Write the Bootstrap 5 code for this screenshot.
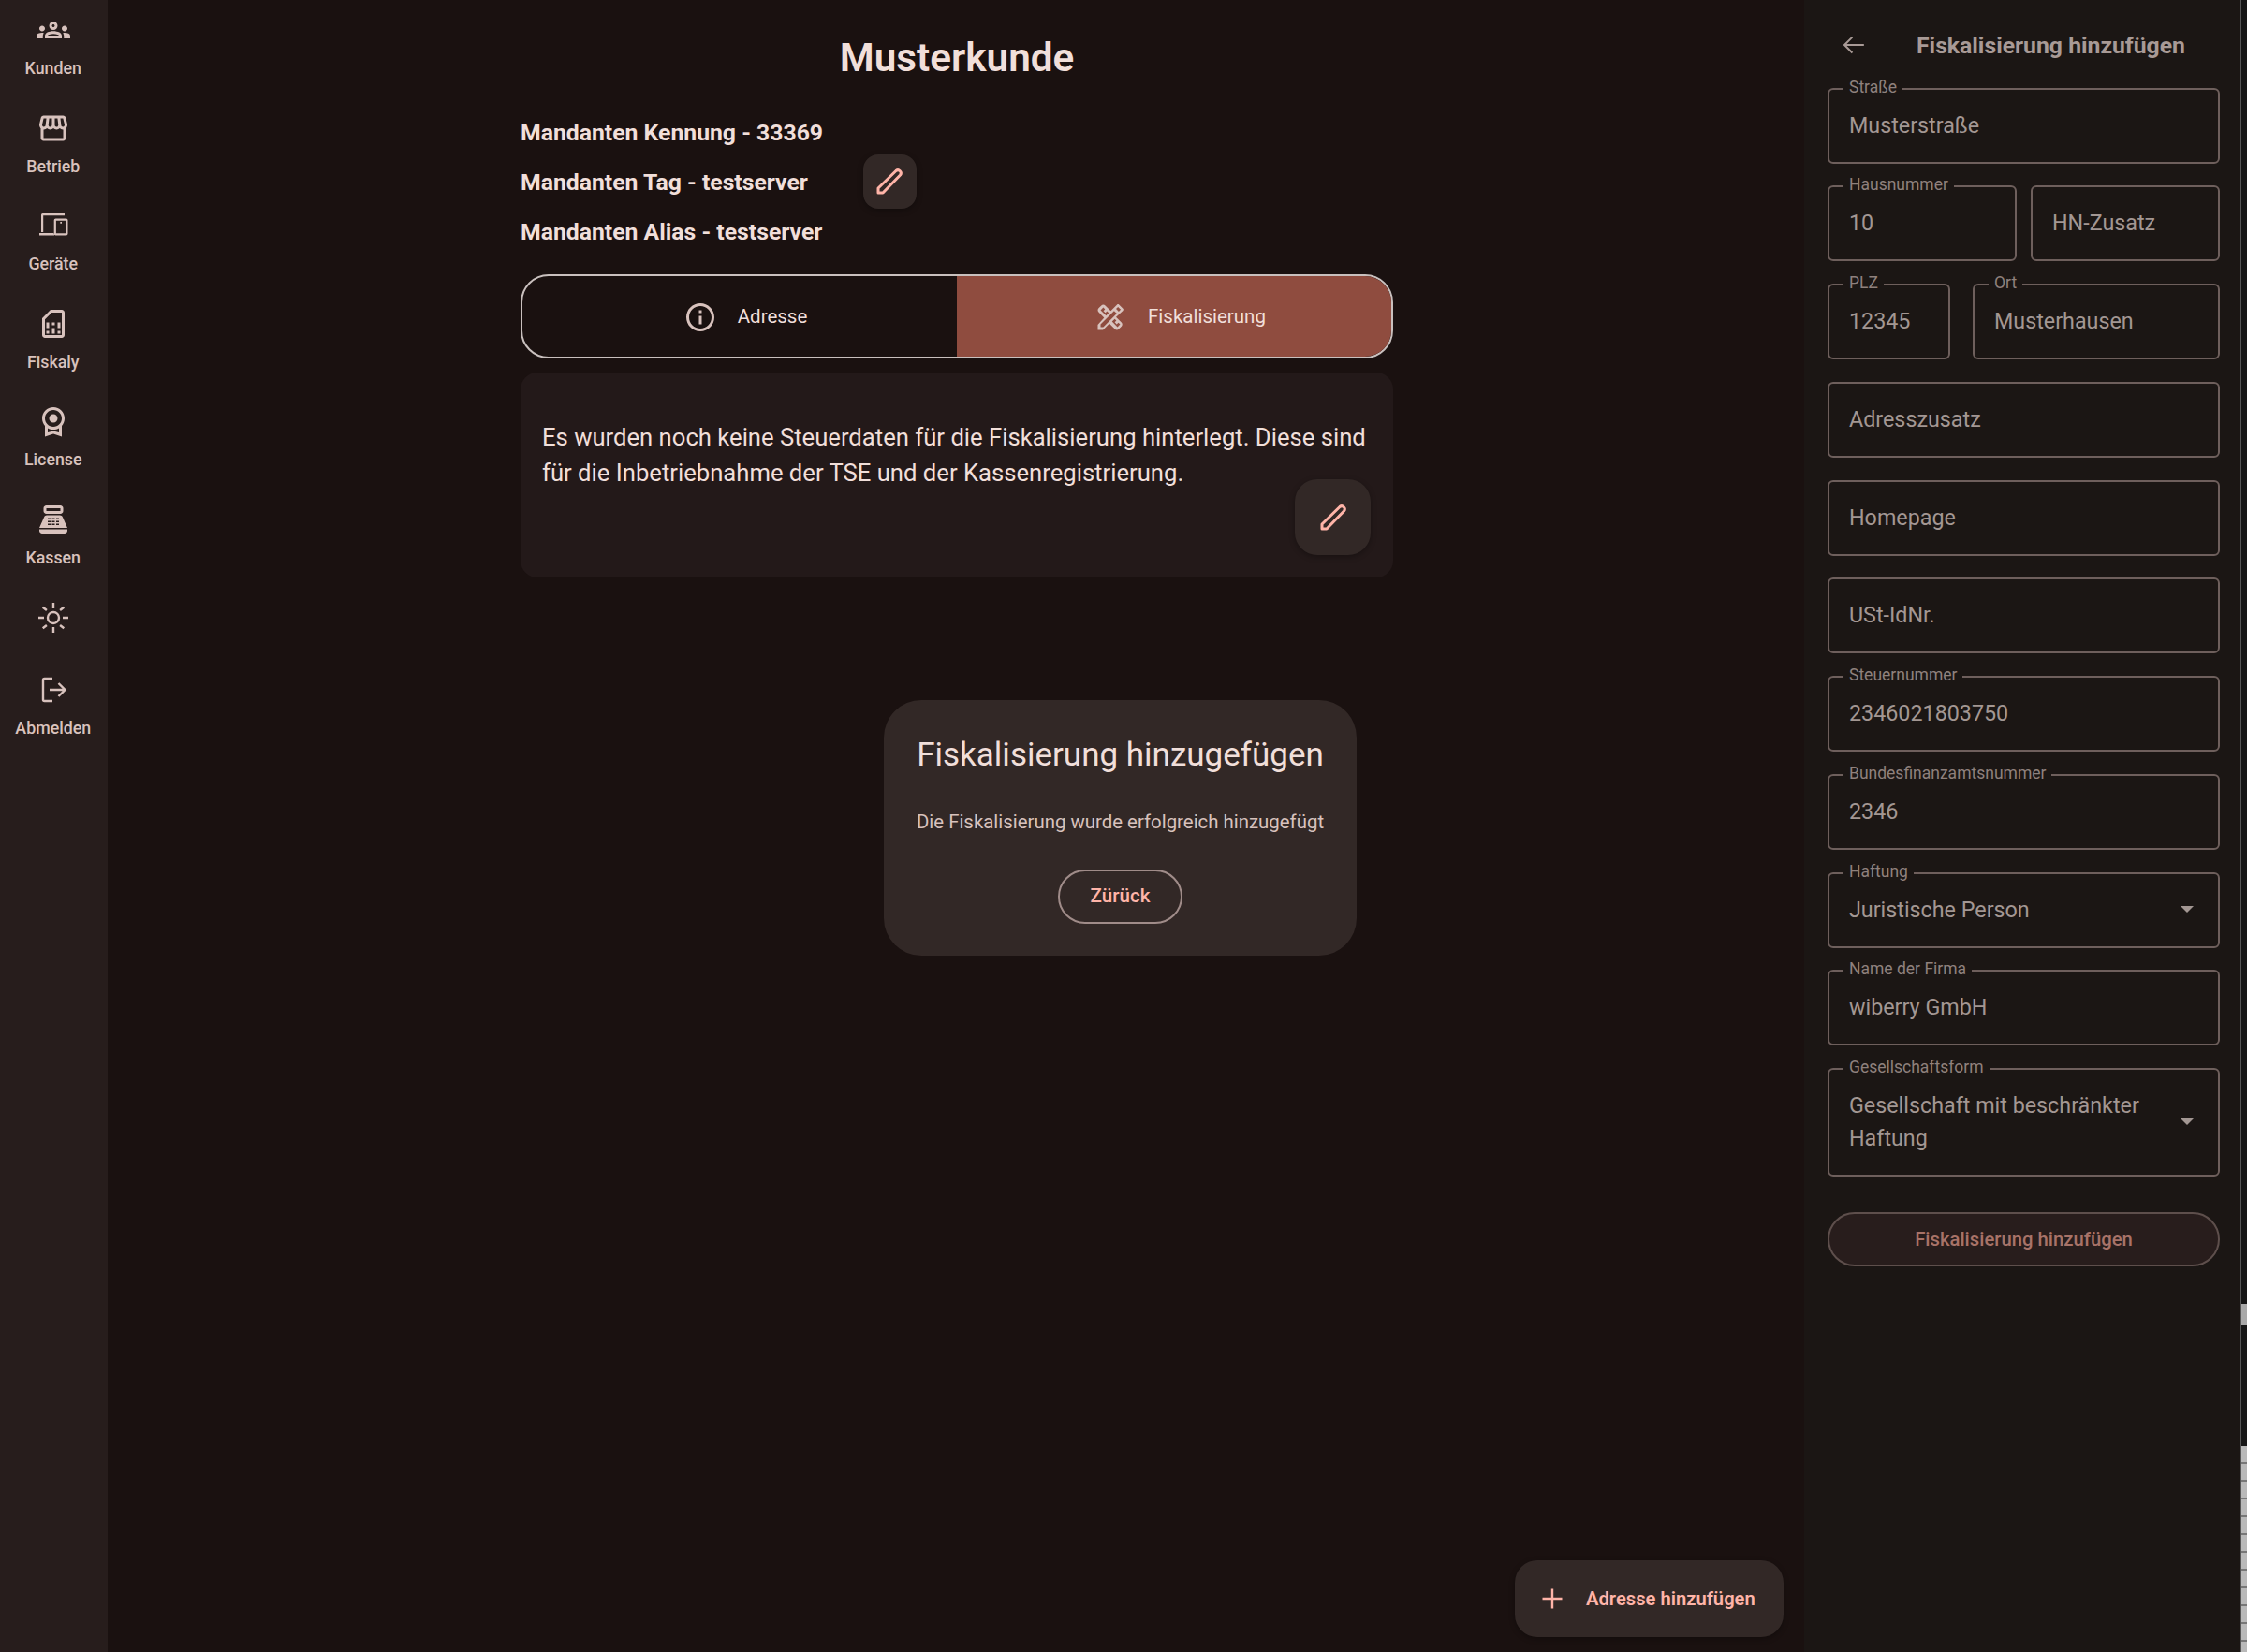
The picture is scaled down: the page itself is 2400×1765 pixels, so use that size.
<!DOCTYPE html>
<html lang="de">
<head>
<meta charset="utf-8">
<title>Musterkunde</title>
<link href="https://cdn.jsdelivr.net/npm/bootstrap@5.3.0/dist/css/bootstrap.min.css" rel="stylesheet">
<style>
html,body{height:100%;margin:0;background:#1a1110;overflow:hidden}
body{font-family:Roboto,"Liberation Sans",sans-serif}
.app-shell{width:2400px;height:1765px}
.side-rail{width:115px;background:#271d1c;padding:14px 1.5px 0 0;flex:none}
.rail-item{height:104.6px;color:#d8c2bd;font-size:17.8px;font-weight:500;line-height:21px}
.rail-item svg{width:36px;height:36px;fill:currentColor;margin-bottom:12px}
.rail-sun{height:77px}
.rail-sun svg{margin-bottom:0}
.main-pane{width:1812px;flex:none;position:relative;background:#1a1110}
.content-col{width:932px;margin-left:441px}
.page-title{font-size:42.3px;font-weight:600;color:#f1dfda;line-height:47px;text-align:center;margin:37.5px 0 30px}
.meta-line{font-size:24.75px;font-weight:700;color:#f1dfda;height:53px;line-height:53px;display:flex;align-items:center}
.tonal-btn{background:#322826;border:0;color:#ffb4a8;box-shadow:0 2px 6px rgba(0,0,0,.3)}
.pen-small{width:57px;height:58px;border-radius:16px;margin-left:59px;flex:none}
.pen-small svg,.pen-big svg{width:36px;height:36px}
.tab-bar{height:90px;border:2px solid #c9c0be;border-radius:30px;overflow:hidden;margin-top:19.5px}
.tab-part{width:50%;font-size:20.5px;color:#f1dfda;gap:22px;padding-left:12px;padding-top:1px}
.tab-part svg{width:36px;height:36px;fill:#d8c2bd}
.tab-on{background:#8f4c3f}
.info-box{background:#231919;border-radius:18px;margin-top:15px;height:219px;padding:50px 23px 0;color:#f1dfda;font-size:25.65px;line-height:38px;position:relative}
.pen-big{position:absolute;right:24px;bottom:24px;width:81px;height:81px;border-radius:24px}
.dlg{position:absolute;left:829px;top:748px;width:505px;height:273px;background:#322826;border-radius:40px;text-align:center;color:#f1dfda}
.dlg-title{font-size:35px;line-height:40px;margin-top:38.5px}
.dlg-text{font-size:20.4px;line-height:28px;color:#d8c2bd;margin-top:37.5px}
.dlg-btn{width:133px;height:58px;margin-top:36.5px;border:2px solid #a08c89;border-radius:29px;color:#ffb4a8;font-size:20.6px;font-weight:500;background:transparent}
.fab-add{position:absolute;right:22px;bottom:16px;width:287px;height:82px;border-radius:24px;font-size:20.2px;font-weight:600;gap:18px;padding-left:22px}
.fab-add svg{width:36px;height:36px;fill:currentColor}
.form-pane{width:466px;flex:none;background:#1b1614;padding:0 22px 0 25px;color:#a39793}
.form-head{height:93.5px;font-size:24.75px;font-weight:700;color:#a89a96;position:relative}
.form-head svg{position:absolute;left:13px;top:33px;width:30px;height:30px;fill:#a89a96}
.form-head span{position:absolute;left:95px;top:34px;line-height:30px;white-space:nowrap}
.field-stack{display:flex;flex-direction:column;gap:23.75px}
.field-duo{display:flex;gap:15px}
.field-duo .out-field{flex:1 1 0}
.plz-row{gap:24px}
.plz-row .plz-field{flex:0 0 131px}
.out-field{position:relative;height:81px;flex:none;border:2px solid #6e5f5c;border-radius:6px;font-size:23.3px;padding:0 21px;display:flex;align-items:center;min-width:0;color:#a39793}
.out-tall{height:116px;line-height:35px}
.out-label{position:absolute;left:15px;top:-13px;font-size:17.5px;line-height:21px;padding:0 6px;background:#1b1614;color:#8f817d;white-space:nowrap}
.sel-caret{position:absolute;right:26px;top:50%;margin-top:-4px;width:0;height:0;border-left:7px solid transparent;border-right:7px solid transparent;border-top:7px solid #a39793}
.submit-pill{height:58px;margin-top:38px;width:100%;border:2px solid #5e4f4c;border-radius:29px;background:#281d1c;color:#a87368;font-size:20.3px;font-weight:500}
.edge-strip{width:7px;flex:none;display:flex;flex-direction:column;border-left:1px solid #555}
.edge-dark{height:1393px;background:#151515}
.edge-thumb{height:23px;background:#a9a9a9}
.edge-gap{height:129px;background:#161616}
.edge-light{flex:1;background:repeating-linear-gradient(#b9b9b9 0 17px,#777 17px 19px)}
</style>
</head>
<body>
<div class="app-shell d-flex">
  <nav class="side-rail d-flex flex-column">
    <div class="rail-item d-flex flex-column align-items-center">
      <svg viewBox="0 0 24 24"><path d="M4,13c1.1,0,2-0.9,2-2c0-1.1-0.9-2-2-2s-2,0.9-2,2C2,12.1,2.9,13,4,13z M5.13,14.1C4.76,14.04,4.39,14,4,14 c-0.99,0-1.93,0.21-2.78,0.58C0.48,14.9,0,15.62,0,16.43V18l4.5,0v-1.61C4.5,15.56,4.73,14.78,5.13,14.1z M20,13c1.1,0,2-0.9,2-2 c0-1.1-0.9-2-2-2s-2,0.9-2,2C18,12.1,18.9,13,20,13z M24,16.43c0-0.81-0.48-1.53-1.22-1.85C21.93,14.21,20.99,14,20,14 c-0.39,0-0.76,0.04-1.13,0.1c0.4,0.68,0.63,1.46,0.63,2.29V18l4.5,0V16.43z M16.24,13.65c-1.17-0.52-2.61-0.9-4.24-0.9 c-1.63,0-3.07,0.39-4.24,0.9C6.68,14.13,6,15.21,6,16.39V18h12v-1.61C18,15.21,17.32,14.13,16.24,13.65z M8.07,16 c0.09-0.23,0.13-0.39,0.91-0.69c0.97-0.38,1.99-0.56,3.02-0.56s2.05,0.18,3.02,0.56c0.77,0.3,0.81,0.46,0.91,0.69H8.07z M12,8 c0.55,0,1,0.45,1,1s-0.45,1-1,1s-1-0.45-1-1S11.45,8,12,8 M12,6c-1.66,0-3,1.34-3,3c0,1.66,1.34,3,3,3s3-1.34,3-3 C15,7.34,13.66,6,12,6L12,6z"/></svg>
      <span>Kunden</span>
    </div>
    <div class="rail-item d-flex flex-column align-items-center">
      <svg viewBox="0 0 24 24"><path d="M21.9 8.89l-1.05-4.37c-.22-.9-1-1.52-1.91-1.52H5.05c-.9 0-1.69.63-1.9 1.52L2.1 8.89c-.24 1.02-.02 2.06.62 2.88.08.11.19.19.28.29V19c0 1.1.9 2 2 2h14c1.1 0 2-.9 2-2v-6.94c.09-.09.2-.18.28-.28.64-.82.87-1.87.62-2.89zm-2.99-3.9l1.05 4.37c.1.42.01.84-.25 1.17-.14.18-.44.47-.94.47-.61 0-1.14-.49-1.21-1.14L16.98 5l1.93-.01zM13 5h1.96l.54 4.52c.05.39-.07.78-.33 1.07-.22.26-.54.41-.95.41-.67 0-1.22-.59-1.22-1.31V5zM8.49 9.52L9.04 5H11v4.69c0 .72-.55 1.31-1.29 1.31-.34 0-.65-.15-.89-.41-.25-.29-.37-.68-.33-1.07zm-4.45-.16L5.05 5h1.97l-.58 4.86c-.08.65-.6 1.14-1.21 1.14-.49 0-.8-.29-.93-.47-.27-.32-.36-.75-.26-1.17zM5 19v-6.03c.08.01.15.03.23.03.87 0 1.66-.36 2.24-.95.6.6 1.4.95 2.31.95.87 0 1.65-.36 2.23-.93.59.57 1.39.93 2.29.93.84 0 1.64-.35 2.24-.95.58.59 1.37.95 2.24.95.08 0 .15-.02.23-.03V19H5z"/></svg>
      <span>Betrieb</span>
    </div>
    <div class="rail-item d-flex flex-column align-items-center">
      <svg viewBox="0 0 36 36"><path d="M6.500 5a1.500 1.500 0 0 0-1.500 1.500V25h2.200V7.200H30V5zM3 26h16v2.400H3zM20.500 10.500a1.800 1.800 0 0 0-1.800 1.800v14.400a1.800 1.800 0 0 0 1.800 1.800h11.200a1.800 1.800 0 0 0 1.800-1.800V12.300a1.800 1.800 0 0 0-1.800-1.800zm.400 2.200h10.400v13.600H20.900zM25.300 14h1.700v1.800h-1.700z" fill-rule="evenodd"/></svg>
      <span>Geräte</span>
    </div>
    <div class="rail-item d-flex flex-column align-items-center">
      <svg viewBox="0 0 24 24"><path d="M18 2h-8L4 8v12c0 1.100.9 2 2 2h12c1.100 0 2-.9 2-2V4c0-1.100-.9-2-2-2zm0 2v16H6V8.830L10.830 4H18zM7 17h2v2H7zm8 0h2v2h-2zM7 11h2v4H7zm4 4h2v4h-2zm0-4h2v2h-2zm4 0h2v4h-2z"/></svg>
      <span>Fiskaly</span>
    </div>
    <div class="rail-item d-flex flex-column align-items-center">
      <svg viewBox="0 0 24 24"><path d="M12 7a3 3 0 1 0 0 6 3 3 0 0 0 0-6zM20 10c0-4.420-3.580-8-8-8s-8 3.580-8 8c0 2.030.76 3.870 2 5.280V23l6-2 6 2v-7.720c1.240-1.410 2-3.250 2-5.280zM12 4c3.310 0 6 2.690 6 6s-2.690 6-6 6-6-2.690-6-6 2.690-6 6-6zm0 15l-4 1.020v-3.100c1.180.68 2.540 1.080 4 1.080s2.820-.4 4-1.080v3.100L12 19z"/></svg>
      <span>License</span>
    </div>
    <div class="rail-item d-flex flex-column align-items-center">
      <svg viewBox="0 0 24 24"><path fill-rule="evenodd" d="M17 2H7c-1.100 0-2 .9-2 2v2c0 1.100.9 2 2 2h10c1.100 0 2-.9 2-2V4c0-1.100-.9-2-2-2zm0 4H7V4h10v2zM20 22H4c-1.100 0-2-.9-2-2v-1h20v1c0 1.100-.9 2-2 2zM18.530 10.190C18.210 9.470 17.490 9 16.700 9H7.300c-.79 0-1.510.47-1.830 1.190L2 18h20zM8 11h2v1H8zm3 0h2v1h-2zm3 0h2v1h-2zM8 13h2v1H8zm3 0h2v1h-2zm3 0h2v1h-2zM8 15h2v1H8zm3 0h2v1h-2zm3 0h2v1h-2z"/></svg>
      <span>Kassen</span>
    </div>
    <div class="rail-item rail-sun d-flex flex-column align-items-center">
      <svg viewBox="0 0 36 36"><g fill="none" stroke="currentColor" stroke-width="2.400"><circle cx="18" cy="18" r="6"/><path d="M18 2v6M18 28v6M2 18h6M28 18h6M6.700 6.700l4.200 3.300M25.100 26l4.200 3.300M29.300 6.700L25.100 10M10.900 26l-4.200 3.300"/></g></svg>
    </div>
    <div class="rail-item d-flex flex-column align-items-center">
      <svg viewBox="0 0 36 36"><path fill="none" stroke="currentColor" stroke-width="2.400" d="M17 6H8.500A1.500 1.500 0 0 0 7 7.500v21A1.500 1.500 0 0 0 8.500 30H17M14 18h16M23.500 11l7 7-7 7"/></svg>
      <span>Abmelden</span>
    </div>
  </nav>

  <main class="main-pane">
    <div class="content-col">
      <h1 class="page-title">Musterkunde</h1>
      <div class="meta-line">Mandanten Kennung - 33369</div>
      <div class="meta-line">
        <span>Mandanten Tag - testserver</span>
        <button class="btn tonal-btn pen-small d-flex align-items-center justify-content-center p-0" type="button" aria-label="Bearbeiten"><svg viewBox="0 0 36 36"><path fill="none" stroke="currentColor" stroke-width="3" stroke-linejoin="round" d="M6 25L25 6.500A3.200 3.200 0 0 1 29.500 11L11 30H6z"/></svg></button>
      </div>
      <div class="meta-line">Mandanten Alias - testserver</div>
      <div class="tab-bar d-flex">
        <div class="tab-part d-flex align-items-center justify-content-center">
          <svg viewBox="0 0 24 24"><path d="M11 7h2v2h-2zm0 4h2v6h-2zm1-9C6.480 2 2 6.480 2 12s4.480 10 10 10 10-4.480 10-10S17.520 2 12 2zm0 18c-4.410 0-8-3.590-8-8s3.590-8 8-8 8 3.590 8 8-3.590 8-8 8z"/></svg>
          <span>Adresse</span>
        </div>
        <div class="tab-part tab-on d-flex align-items-center justify-content-center">
          <svg viewBox="0 0 24 24"><path fill-rule="evenodd" d="M20.970 7.270c.39-.39.39-1.020 0-1.410l-2.830-2.830c-.39-.39-1.020-.39-1.410 0l-4.490 4.490-3.890-3.890c-.78-.78-2.050-.78-2.830 0l-1.900 1.900c-.78.78-.78 2.050 0 2.830l3.890 3.890L3 17.250V21h3.750l4.520-4.520 3.890 3.890c.95.95 2.230.6 2.830 0l1.900-1.900c.78-.78.78-2.050 0-2.830l-3.890-3.890zM5.040 6.940l1.890-1.900L8.200 6.310 7.020 7.500l1.410 1.410 1.190-1.190 1.200 1.200-1.900 1.900zm11.230 7.440l-1.190 1.190 1.410 1.410 1.190-1.190 1.270 1.270-1.900 1.900-3.890-3.890 1.900-1.900zM6.920 19H5v-1.920l9.610-9.610 1.920 1.920zM16.030 6.050l1.410-1.410 1.920 1.920-1.410 1.410z"/></svg>
          <span>Fiskalisierung</span>
        </div>
      </div>
      <div class="info-box">
        Es wurden noch keine Steuerdaten für die Fiskalisierung hinterlegt. Diese sind für die Inbetriebnahme der TSE und der Kassenregistrierung.
        <button class="btn tonal-btn pen-big d-flex align-items-center justify-content-center p-0" type="button" aria-label="Bearbeiten"><svg viewBox="0 0 36 36"><path fill="none" stroke="currentColor" stroke-width="3" stroke-linejoin="round" d="M6 25L25 6.500A3.200 3.200 0 0 1 29.500 11L11 30H6z"/></svg></button>
      </div>
    </div>

    <div class="dlg">
      <div class="dlg-title">Fiskalisierung hinzugefügen</div>
      <div class="dlg-text">Die Fiskalisierung wurde erfolgreich hinzugefügt</div>
      <button class="btn dlg-btn p-0" type="button">Zürück</button>
    </div>

    <button class="btn tonal-btn fab-add d-flex align-items-center" type="button">
      <svg viewBox="0 0 24 24"><path d="M11.200 5h1.600v6.200H19v1.600h-6.200V19h-1.600v-6.200H5v-1.600h6.200z"/></svg>
      <span>Adresse hinzufügen</span>
    </button>
  </main>

  <aside class="form-pane">
    <div class="form-head">
      <svg viewBox="0 0 36 36"><path d="M33 17h-22l8-8-1.700-1.700L6.300 18.200l11 11 1.700-1.700-8-8h22z" transform="translate(-2 -.2)"/></svg>
      <span>Fiskalisierung hinzufügen</span>
    </div>
    <div class="field-stack">
      <div class="out-field"><span class="out-label">Straße</span>Musterstraße</div>
      <div class="field-duo">
        <div class="out-field"><span class="out-label">Hausnummer</span>10</div>
        <div class="out-field">HN-Zusatz</div>
      </div>
      <div class="field-duo plz-row">
        <div class="out-field plz-field"><span class="out-label">PLZ</span>12345</div>
        <div class="out-field ort-field"><span class="out-label">Ort</span>Musterhausen</div>
      </div>
      <div class="out-field">Adresszusatz</div>
      <div class="out-field">Homepage</div>
      <div class="out-field">USt-IdNr.</div>
      <div class="out-field"><span class="out-label">Steuernummer</span>2346021803750</div>
      <div class="out-field"><span class="out-label">Bundesfinanzamtsnummer</span>2346</div>
      <div class="out-field"><span class="out-label">Haftung</span>Juristische Person<i class="sel-caret"></i></div>
      <div class="out-field"><span class="out-label">Name der Firma</span>wiberry GmbH</div>
      <div class="out-field out-tall"><span class="out-label">Gesellschaftsform</span><span>Gesellschaft mit beschränkter<br>Haftung</span><i class="sel-caret"></i></div>
    </div>
    <button class="btn submit-pill p-0" type="button">Fiskalisierung hinzufügen</button>
  </aside>

  <div class="edge-strip">
    <div class="edge-dark"></div>
    <div class="edge-thumb"></div>
    <div class="edge-gap"></div>
    <div class="edge-light"></div>
  </div>
</div>
</body>
</html>
